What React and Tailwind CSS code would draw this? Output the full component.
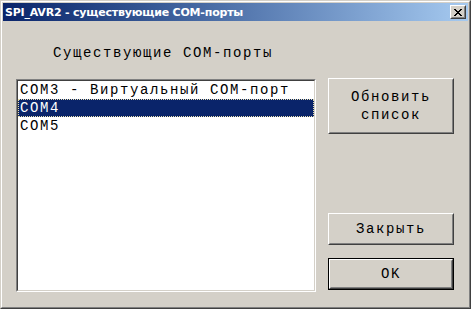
import React from 'react';

const ports = ['COM3 - Виртуальный COM-порт', 'COM4', 'COM5'];

const Button = ({ children, isDefault, className }) => {
  const face = (
    <div className="h-full w-full border border-t-white border-l-white border-b-[#404040] border-r-[#404040]">
      <div className="h-full w-full border border-t-[#d4d0c8] border-l-[#d4d0c8] border-b-[#808080] border-r-[#808080] flex items-center justify-center text-center leading-[18px]">
        {children}
      </div>
    </div>
  );
  return (
    <div className={`w-[126px] ${className}`}>
      {isDefault ? <div className="h-full w-full border border-black">{face}</div> : face}
    </div>
  );
};

export default function App() {
  const selected = 1;
  return (
    <div className="w-[471px] h-[309px] bg-[#d4d0c8] border border-t-[#d4d0c8] border-l-[#d4d0c8] border-b-[#404040] border-r-[#404040]">
      <div className="h-full w-full border border-t-white border-l-white border-b-[#808080] border-r-[#808080] p-px flex flex-col">
        {/* Title bar */}
        <div className="h-[18px] shrink-0 flex items-center justify-between bg-gradient-to-r from-[#0a246a] to-[#a6caf0] pl-[2px] pr-[2px]">
          <span className="font-['DejaVu_Sans',sans-serif] font-bold text-[11px] text-white tracking-[-0.2px] leading-none whitespace-nowrap">
            SPI_AVR2 - существующие COM-порты
          </span>
          <div className="w-[16px] h-[14px] bg-[#d4d0c8] border border-t-white border-l-white border-b-[#404040] border-r-[#404040]">
            <div className="h-full w-full border border-t-[#d4d0c8] border-l-[#d4d0c8] border-b-[#808080] border-r-[#808080] flex items-center justify-center">
              <svg width="8" height="7" viewBox="0 0 8 7" shapeRendering="crispEdges">
                <path d="M0 0h2v1h-2zM6 0h2v1h-2zM1 1h2v1h-2zM5 1h2v1h-2zM2 2h4v1h-4zM3 3h2v1h-2zM2 4h4v1h-4zM1 5h2v1h-2zM5 5h2v1h-2zM0 6h2v1h-2zM6 6h2v1h-2z" fill="#000" />
              </svg>
            </div>
          </div>
        </div>

        {/* Body */}
        <div className="flex-1 flex font-['Liberation_Mono',monospace] text-[14px] tracking-[1.6px] text-black">
          <div className="pl-[13px] flex flex-col">
            <div className="h-[58px] flex items-center pt-[6px] pl-[37px] whitespace-nowrap">
              Существующие COM-порты
            </div>
            <div className="w-[300px] h-[213px] bg-white border border-t-[#808080] border-l-[#808080] border-b-white border-r-white">
              <div className="h-full w-full border border-t-[#404040] border-l-[#404040] border-b-[#d4d0c8] border-r-[#d4d0c8]">
                {ports.map((p, i) => (
                  <div
                    key={p}
                    className={`h-[18px] flex items-center pl-[2px] whitespace-nowrap ${
                      i === selected
                        ? 'bg-[#0a246a] text-white border border-dotted border-[#e8e0b0]'
                        : ''
                    }`}
                  >
                    <span className={i === selected ? '-ml-px' : ''}>{p}</span>
                  </div>
                ))}
              </div>
            </div>
          </div>

          <div className="ml-[12px] flex flex-col">
            <Button className="mt-[57px] h-[56px]">
              Обновить
              <br />
              список
            </Button>
            <Button className="mt-[79px] h-[32px]">Закрыть</Button>
            <Button className="mt-[13px] h-[32px]" isDefault>
              OK
            </Button>
          </div>
        </div>
      </div>
    </div>
  );
}
